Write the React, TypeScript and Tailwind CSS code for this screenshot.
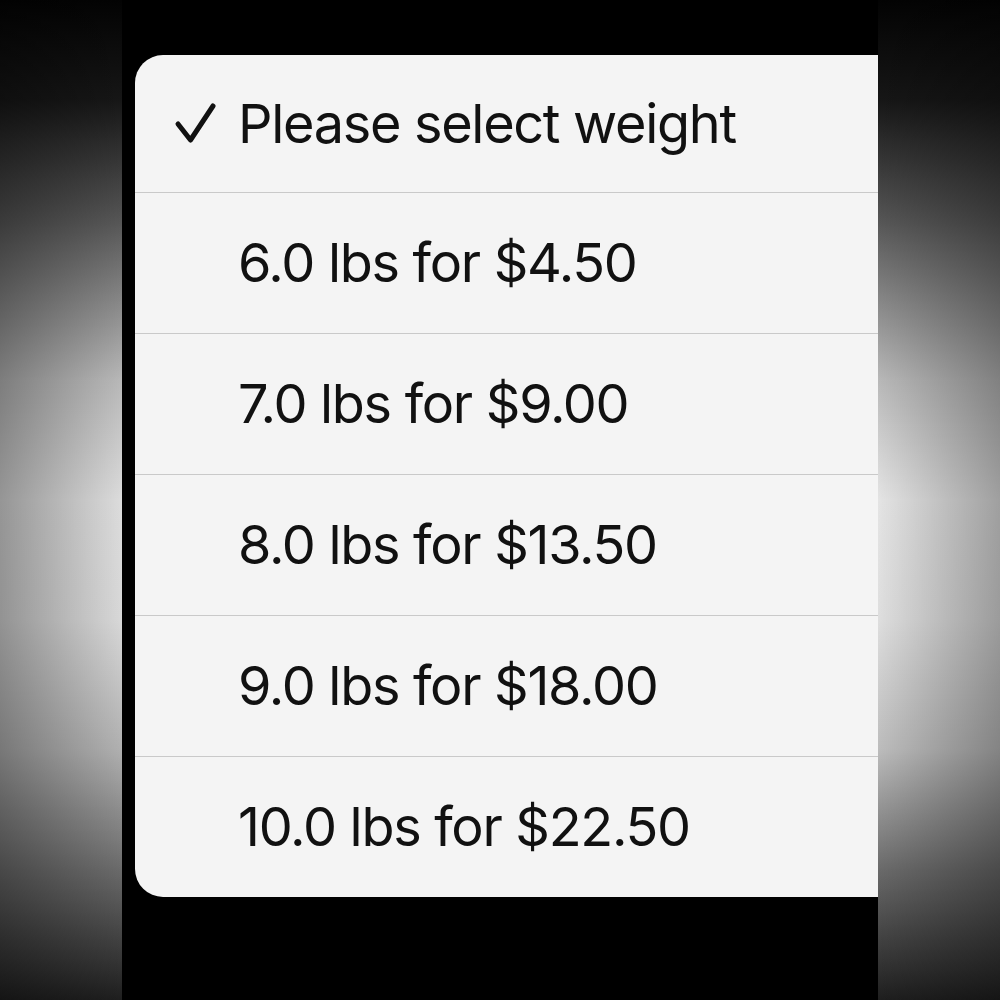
import React from "react";

const options = [
  "6.0 lbs for $4.50",
  "7.0 lbs for $9.00",
  "8.0 lbs for $13.50",
  "9.0 lbs for $18.00",
  "10.0 lbs for $22.50",
];

function Check() {
  return (
    <svg width="44" height="44" viewBox="0 0 44 44" className="shrink-0">
      <path
        d="M5 22 L17.5 38 L40 4"
        fill="none"
        stroke="#111111"
        strokeWidth="5"
        strokeLinecap="round"
        strokeLinejoin="round"
      />
    </svg>
  );
}

export default function App() {
  return (
    <div className="flex w-[1000px] h-[1000px] overflow-hidden font-['Inter',sans-serif]">
      <div className="w-[122px] h-full bg-[linear-gradient(to_bottom,#030303_0%,#161616_10%,#555_22%,#b8b8b8_38%,#dcdcdc_50%,#d8d8d8_62%,#b0b0b0_75%,#6a6a6a_87%,#1e1e1e_100%)] relative">
        <div className="absolute inset-0 bg-[linear-gradient(to_right,rgba(0,0,0,0.32),rgba(0,0,0,0))]" />
      </div>
      <div className="w-[756px] h-full bg-black pt-[55px] pl-[13px]">
        <div className="h-[842px] bg-[#f4f4f4] rounded-l-[28px] flex flex-col overflow-hidden text-[#111111]">
          <div className="h-[138px] shrink-0 border-b border-[#c9c9c9] flex items-center pl-[38px]">
            <Check />
            <span className="ml-[21px] text-[54px] leading-none tracking-[-1.3px]">Please select weight</span>
          </div>
          {options.map((o, i) => (
            <div
              key={o}
              className={
                i < options.length - 1
                  ? "h-[141px] shrink-0 border-b border-[#c9c9c9] flex items-center pl-[103px]"
                  : "flex-1 flex items-center pl-[103px]"
              }
            >
              <span className="text-[54px] leading-none tracking-[-1.3px]">{o}</span>
            </div>
          ))}
        </div>
      </div>
      <div className="w-[122px] h-full bg-[linear-gradient(to_bottom,#030303_0%,#161616_10%,#555_22%,#b8b8b8_38%,#e4e4e4_50%,#dedede_62%,#bcbcbc_75%,#6a6a6a_87%,#1e1e1e_100%)] relative">
        <div className="absolute inset-0 bg-[linear-gradient(to_left,rgba(0,0,0,0.3),rgba(0,0,0,0))]" />
      </div>
    </div>
  );
}
